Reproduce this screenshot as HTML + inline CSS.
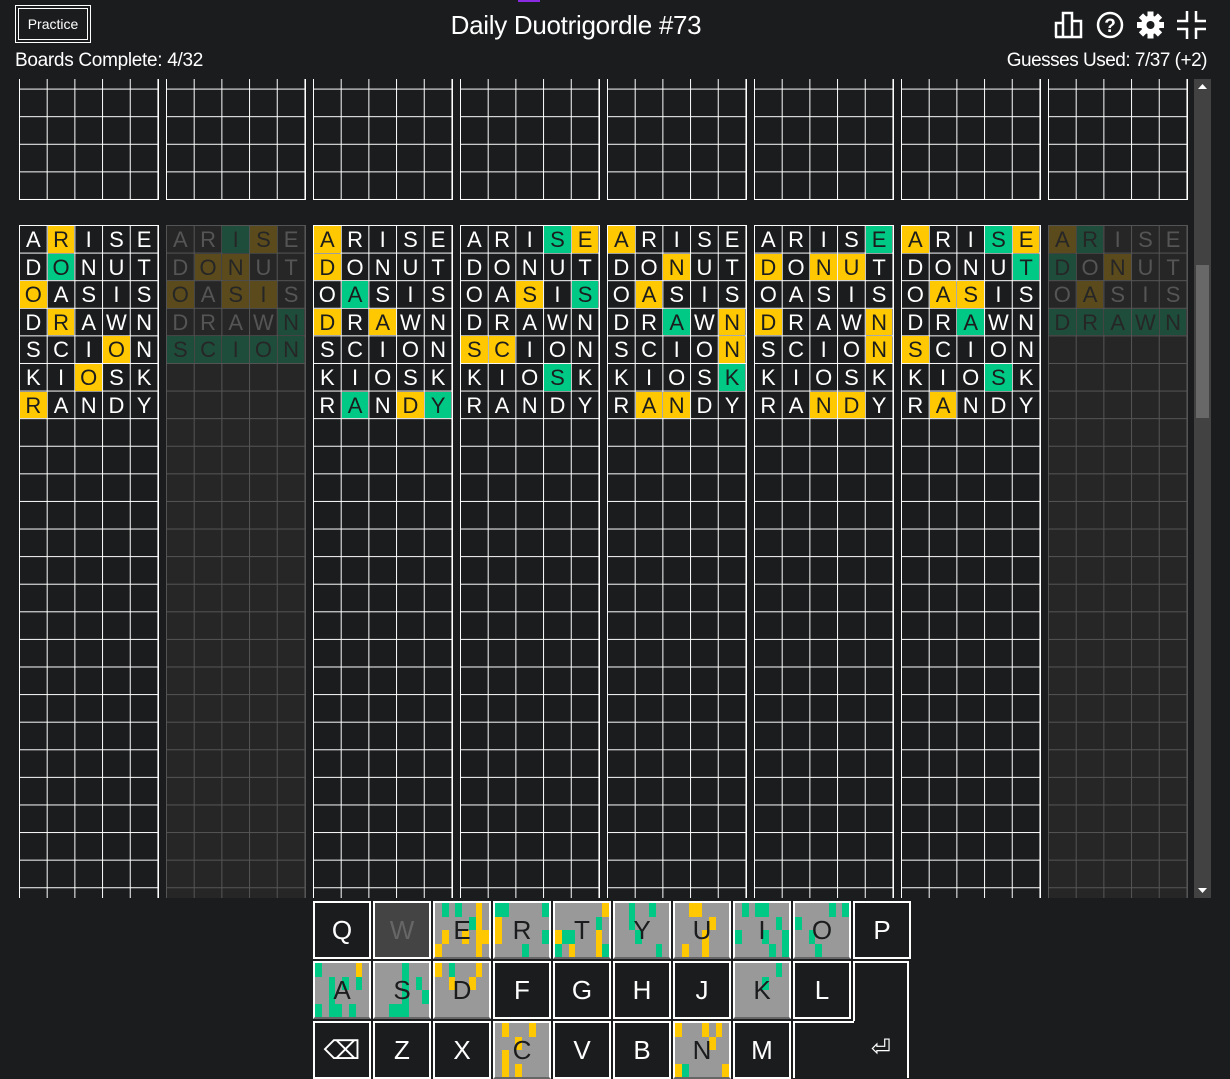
<!DOCTYPE html>
<html><head><meta charset="utf-8"><style>
*{margin:0;padding:0;box-sizing:border-box}
body{width:1230px;height:1078px;background:#1b1c1e;position:relative;overflow:hidden;font-family:"Liberation Sans",sans-serif;color:#fff}
.pr{position:absolute;left:15px;top:5px;width:76px;height:38px;border:4px double #fff;font-size:14px;line-height:30px;text-align:center}
.title{position:absolute;left:376px;width:400px;top:10px;text-align:center;font-size:26px;letter-spacing:-0.3px}
.bc{position:absolute;left:15px;top:50px;font-size:19px;letter-spacing:-0.3px}
.gu{position:absolute;right:23px;top:50px;font-size:19px;letter-spacing:-0.5px}
.sc{position:absolute;left:0;top:79px;width:1192px;height:819px;overflow:hidden}
.b{position:absolute;width:139.5px;border-right:1px solid #fff;border-bottom:1px solid #fff;
background:linear-gradient(to right,#fff 1px,transparent 1px) 0 0/27.7px 27.6px,linear-gradient(to bottom,#fff 1px,transparent 1px) 0 0/27.7px 27.6px}
.b.d{border-color:#555;background:linear-gradient(to right,#555 1px,transparent 1px) 0 0/27.7px 27.6px,linear-gradient(to bottom,#555 1px,transparent 1px) 0 0/27.7px 27.6px,#262626}
.r{display:flex;height:27.6px}
.r span{width:27.7px;height:27.6px;border-left:1px solid transparent;border-top:1px solid transparent;background-clip:padding-box;text-align:center;font-size:22px;line-height:27px}
.d .r span{color:#555}
.r .y{background-color:#ffc800;color:#1b1c1e}
.r .g{background-color:#00c986;color:#1b1c1e}
.d .r .y{background-color:#5a4a1c;color:#262626}
.d .r .g{background-color:#1f4d3c;color:#262626}
.sb{position:absolute;left:1194px;top:79px;width:17px;height:819px;background:#424242}
.th{position:absolute;left:2px;top:186px;width:13px;height:153px;background:#686868}
.k{position:absolute;width:58px;height:58px;border:2px solid #fff;background:#1b1c1e;font-size:26px;text-align:center;line-height:54px}
.k.c{background:#999;color:#1b1c1e;border-bottom-color:#666}
.k.c .m{position:absolute;inset:0;display:grid;grid-template-columns:repeat(8,1fr);grid-template-rows:repeat(4,1fr)}
.m i.g{background:#00c986}.m i.y{background:#ffc800}
.k .t{position:relative}
</style></head><body>
<div style="position:absolute;left:518px;top:0;width:22px;height:2px;background:#8a2be2"></div>
<div class="pr">Practice</div>
<div class="title">Daily Duotrigordle #73</div>
<div class="bc">Boards Complete: 4/32</div>
<div class="gu">Guesses Used: 7/37 (+2)</div>
<svg style="position:absolute;left:1054px;top:11px" width="30" height="28" viewBox="0 0 30 28" fill="none" stroke="#fff" stroke-width="2.5"><path d="M2 26V12H9V26M9 26V2H18V26M18 26V10H27V26H1"/></svg>
<svg style="position:absolute;left:1096px;top:11px" width="28" height="28" viewBox="0 0 28 28"><circle cx="14" cy="14" r="12" fill="none" stroke="#fff" stroke-width="2.5"/><text x="14" y="21" font-size="19" font-weight="bold" text-anchor="middle" fill="#fff" font-family="Liberation Sans">?</text></svg>
<svg style="position:absolute;left:1136px;top:11px" width="29" height="28" viewBox="-14 -14 28 28"><g fill="#fff"><circle r="9.5"/><rect x="-3" y="-13.5" width="6" height="27"/><rect x="-3" y="-13.5" width="6" height="27" transform="rotate(45)"/><rect x="-3" y="-13.5" width="6" height="27" transform="rotate(90)"/><rect x="-3" y="-13.5" width="6" height="27" transform="rotate(135)"/></g><circle r="4" fill="#1b1c1e"/></svg>
<svg style="position:absolute;left:1177px;top:11px" width="29" height="28" viewBox="0 0 29 28" fill="none" stroke="#fff" stroke-width="2.5"><path d="M10 0V10H0M19 0V10H29M0 18H10V28M29 18H19V28"/></svg>

<div class="sc">
<div class="b" style="left:19px;top:-18px;height:139px"></div>
<div class="b" style="left:166px;top:-18px;height:139px"></div>
<div class="b" style="left:313px;top:-18px;height:139px"></div>
<div class="b" style="left:460px;top:-18px;height:139px"></div>
<div class="b" style="left:607px;top:-18px;height:139px"></div>
<div class="b" style="left:754px;top:-18px;height:139px"></div>
<div class="b" style="left:901px;top:-18px;height:139px"></div>
<div class="b" style="left:1048px;top:-18px;height:139px"></div>

<div class="b" style="left:19px;top:146px;height:1026px">
<div class="r"><span>A</span><span class="y">R</span><span>I</span><span>S</span><span>E</span></div>
<div class="r"><span>D</span><span class="g">O</span><span>N</span><span>U</span><span>T</span></div>
<div class="r"><span class="y">O</span><span>A</span><span>S</span><span>I</span><span>S</span></div>
<div class="r"><span>D</span><span class="y">R</span><span>A</span><span>W</span><span>N</span></div>
<div class="r"><span>S</span><span>C</span><span>I</span><span class="y">O</span><span>N</span></div>
<div class="r"><span>K</span><span>I</span><span class="y">O</span><span>S</span><span>K</span></div>
<div class="r"><span class="y">R</span><span>A</span><span>N</span><span>D</span><span>Y</span></div>
</div>
<div class="b d" style="left:166px;top:146px;height:1026px">
<div class="r"><span>A</span><span>R</span><span class="g">I</span><span class="y">S</span><span>E</span></div>
<div class="r"><span>D</span><span class="y">O</span><span class="y">N</span><span>U</span><span>T</span></div>
<div class="r"><span class="y">O</span><span>A</span><span class="y">S</span><span class="y">I</span><span>S</span></div>
<div class="r"><span>D</span><span>R</span><span>A</span><span>W</span><span class="g">N</span></div>
<div class="r"><span class="g">S</span><span class="g">C</span><span class="g">I</span><span class="g">O</span><span class="g">N</span></div>
</div>
<div class="b" style="left:313px;top:146px;height:1026px">
<div class="r"><span class="y">A</span><span>R</span><span>I</span><span>S</span><span>E</span></div>
<div class="r"><span class="y">D</span><span>O</span><span>N</span><span>U</span><span>T</span></div>
<div class="r"><span>O</span><span class="g">A</span><span>S</span><span>I</span><span>S</span></div>
<div class="r"><span class="y">D</span><span>R</span><span class="y">A</span><span>W</span><span>N</span></div>
<div class="r"><span>S</span><span>C</span><span>I</span><span>O</span><span>N</span></div>
<div class="r"><span>K</span><span>I</span><span>O</span><span>S</span><span>K</span></div>
<div class="r"><span>R</span><span class="g">A</span><span>N</span><span class="y">D</span><span class="g">Y</span></div>
</div>
<div class="b" style="left:460px;top:146px;height:1026px">
<div class="r"><span>A</span><span>R</span><span>I</span><span class="g">S</span><span class="y">E</span></div>
<div class="r"><span>D</span><span>O</span><span>N</span><span>U</span><span>T</span></div>
<div class="r"><span>O</span><span>A</span><span class="y">S</span><span>I</span><span class="g">S</span></div>
<div class="r"><span>D</span><span>R</span><span>A</span><span>W</span><span>N</span></div>
<div class="r"><span class="y">S</span><span class="y">C</span><span>I</span><span>O</span><span>N</span></div>
<div class="r"><span>K</span><span>I</span><span>O</span><span class="g">S</span><span>K</span></div>
<div class="r"><span>R</span><span>A</span><span>N</span><span>D</span><span>Y</span></div>
</div>
<div class="b" style="left:607px;top:146px;height:1026px">
<div class="r"><span class="y">A</span><span>R</span><span>I</span><span>S</span><span>E</span></div>
<div class="r"><span>D</span><span>O</span><span class="y">N</span><span>U</span><span>T</span></div>
<div class="r"><span>O</span><span class="y">A</span><span>S</span><span>I</span><span>S</span></div>
<div class="r"><span>D</span><span>R</span><span class="g">A</span><span>W</span><span class="y">N</span></div>
<div class="r"><span>S</span><span>C</span><span>I</span><span>O</span><span class="y">N</span></div>
<div class="r"><span>K</span><span>I</span><span>O</span><span>S</span><span class="g">K</span></div>
<div class="r"><span>R</span><span class="y">A</span><span class="y">N</span><span>D</span><span>Y</span></div>
</div>
<div class="b" style="left:754px;top:146px;height:1026px">
<div class="r"><span>A</span><span>R</span><span>I</span><span>S</span><span class="g">E</span></div>
<div class="r"><span class="y">D</span><span>O</span><span class="y">N</span><span class="y">U</span><span>T</span></div>
<div class="r"><span>O</span><span>A</span><span>S</span><span>I</span><span>S</span></div>
<div class="r"><span class="y">D</span><span>R</span><span>A</span><span>W</span><span class="y">N</span></div>
<div class="r"><span>S</span><span>C</span><span>I</span><span>O</span><span class="y">N</span></div>
<div class="r"><span>K</span><span>I</span><span>O</span><span>S</span><span>K</span></div>
<div class="r"><span>R</span><span>A</span><span class="y">N</span><span class="y">D</span><span>Y</span></div>
</div>
<div class="b" style="left:901px;top:146px;height:1026px">
<div class="r"><span class="y">A</span><span>R</span><span>I</span><span class="g">S</span><span class="y">E</span></div>
<div class="r"><span>D</span><span>O</span><span>N</span><span>U</span><span class="g">T</span></div>
<div class="r"><span>O</span><span class="y">A</span><span class="y">S</span><span>I</span><span>S</span></div>
<div class="r"><span>D</span><span>R</span><span class="g">A</span><span>W</span><span>N</span></div>
<div class="r"><span class="y">S</span><span>C</span><span>I</span><span>O</span><span>N</span></div>
<div class="r"><span>K</span><span>I</span><span>O</span><span class="g">S</span><span>K</span></div>
<div class="r"><span>R</span><span class="y">A</span><span>N</span><span>D</span><span>Y</span></div>
</div>
<div class="b d" style="left:1048px;top:146px;height:1026px">
<div class="r"><span class="y">A</span><span class="g">R</span><span>I</span><span>S</span><span>E</span></div>
<div class="r"><span class="g">D</span><span>O</span><span class="y">N</span><span>U</span><span>T</span></div>
<div class="r"><span>O</span><span class="y">A</span><span>S</span><span>I</span><span>S</span></div>
<div class="r"><span class="g">D</span><span class="g">R</span><span class="g">A</span><span class="g">W</span><span class="g">N</span></div>
</div>
</div>

<div class="sb"><div class="th"></div>
<svg style="position:absolute;left:4px;top:5px" width="9" height="5"><path d="M0 5L4.5 0L9 5Z" fill="#fff"/></svg>
<svg style="position:absolute;left:4px;top:809px" width="9" height="5"><path d="M0 0L4.5 5L9 0Z" fill="#fff"/></svg>
</div>

<div class="k" style="left:313px;top:901px">Q</div>
<div class="k" style="left:373px;top:901px;background:#444;color:#666">W</div>
<div class="k c" style="left:433px;top:901px"><div class="m"><i></i><i class=g></i><i></i><i class=g></i><i></i><i></i><i class=y></i><i></i><i></i><i></i><i></i><i></i><i></i><i class=g></i><i class=y></i><i></i><i></i><i class=y></i><i></i><i></i><i class=y></i><i></i><i class=y></i><i class=y></i><i class=y></i><i></i><i></i><i></i><i></i><i></i><i class=y></i><i></i></div><span class="t">E</span></div>
<div class="k c" style="left:493px;top:901px"><div class="m"><i class=g></i><i class=g></i><i></i><i></i><i></i><i></i><i></i><i class=g></i><i class=y></i><i></i><i></i><i></i><i></i><i></i><i></i><i></i><i class=y></i><i></i><i></i><i></i><i></i><i></i><i></i><i class=g></i><i></i><i></i><i></i><i></i><i class=g></i><i></i><i></i><i></i></div><span class="t">R</span></div>
<div class="k c" style="left:553px;top:901px"><div class="m"><i></i><i></i><i></i><i></i><i></i><i></i><i></i><i class=y></i><i></i><i></i><i></i><i></i><i></i><i></i><i class=g></i><i></i><i class=y></i><i class=g></i><i class=g></i><i></i><i></i><i></i><i class=y></i><i></i><i class=g></i><i></i><i class=y></i><i></i><i></i><i></i><i class=y></i><i class=g></i></div><span class="t">T</span></div>
<div class="k c" style="left:613px;top:901px"><div class="m"><i></i><i></i><i class=g></i><i></i><i></i><i class=g></i><i></i><i></i><i></i><i></i><i class=g></i><i></i><i></i><i></i><i></i><i></i><i></i><i></i><i></i><i class=g></i><i></i><i></i><i></i><i></i><i></i><i></i><i></i><i></i><i></i><i></i><i class=g></i><i></i></div><span class="t">Y</span></div>
<div class="k c" style="left:673px;top:901px"><div class="m"><i></i><i></i><i class=y></i><i class=y></i><i></i><i></i><i></i><i></i><i></i><i></i><i></i><i></i><i></i><i class=y></i><i></i><i></i><i></i><i></i><i></i><i></i><i class=y></i><i></i><i></i><i></i><i></i><i class=y></i><i></i><i></i><i class=y></i><i></i><i></i><i></i></div><span class="t">U</span></div>
<div class="k c" style="left:733px;top:901px"><div class="m"><i></i><i class=g></i><i></i><i class=g></i><i class=g></i><i></i><i></i><i></i><i></i><i></i><i></i><i></i><i></i><i></i><i class=g></i><i></i><i class=g></i><i></i><i></i><i></i><i class=g></i><i></i><i></i><i class=g></i><i></i><i></i><i></i><i></i><i></i><i class=g></i><i></i><i class=g></i></div><span class="t">I</span></div>
<div class="k c" style="left:793px;top:901px"><div class="m"><i></i><i></i><i></i><i></i><i></i><i class=g></i><i></i><i class=g></i><i class=g></i><i></i><i></i><i></i><i></i><i></i><i></i><i></i><i></i><i></i><i class=g></i><i></i><i></i><i></i><i></i><i></i><i></i><i></i><i></i><i class=g></i><i></i><i></i><i></i><i></i></div><span class="t">O</span></div>
<div class="k" style="left:853px;top:901px">P</div>
<div class="k c" style="left:313px;top:961px"><div class="m"><i class=g></i><i></i><i></i><i></i><i></i><i></i><i class=y></i><i></i><i></i><i></i><i class=g></i><i></i><i class=g></i><i></i><i class=g></i><i></i><i></i><i></i><i class=g></i><i></i><i></i><i></i><i></i><i></i><i class=g></i><i></i><i class=g></i><i class=g></i><i></i><i class=g></i><i></i><i></i></div><span class="t">A</span></div>
<div class="k c" style="left:373px;top:961px"><div class="m"><i></i><i></i><i></i><i></i><i class=g></i><i></i><i></i><i></i><i></i><i></i><i></i><i></i><i class=g></i><i></i><i class=g></i><i></i><i></i><i></i><i></i><i></i><i class=g></i><i></i><i></i><i class=g></i><i></i><i></i><i class=g></i><i class=g></i><i class=g></i><i></i><i></i><i></i></div><span class="t">S</span></div>
<div class="k c" style="left:433px;top:961px"><div class="m"><i class=y></i><i></i><i class=g></i><i></i><i></i><i></i><i class=y></i><i></i><i></i><i></i><i class=y></i><i></i><i></i><i class=y></i><i></i><i></i><i></i><i></i><i></i><i></i><i></i><i></i><i></i><i></i><i></i><i></i><i></i><i></i><i></i><i></i><i></i><i></i></div><span class="t">D</span></div>
<div class="k" style="left:493px;top:961px">F</div>
<div class="k" style="left:553px;top:961px">G</div>
<div class="k" style="left:613px;top:961px">H</div>
<div class="k" style="left:673px;top:961px">J</div>
<div class="k c" style="left:733px;top:961px"><div class="m"><i></i><i></i><i></i><i></i><i></i><i></i><i class=g></i><i></i><i></i><i></i><i></i><i></i><i class=g></i><i></i><i></i><i></i><i></i><i></i><i></i><i></i><i></i><i></i><i></i><i></i><i></i><i></i><i></i><i></i><i></i><i></i><i></i><i></i></div><span class="t">K</span></div>
<div class="k" style="left:793px;top:961px">L</div>
<div style="position:absolute;left:853px;top:961px;width:56px;height:62px;border:2px solid #fff;border-bottom:none;background:#1b1c1e"></div>
<div class="k" style="left:313px;top:1021px">⌫</div>
<div class="k" style="left:373px;top:1021px">Z</div>
<div class="k" style="left:433px;top:1021px">X</div>
<div class="k c" style="left:493px;top:1021px"><div class="m"><i></i><i class=y></i><i></i><i></i><i></i><i class=y></i><i></i><i></i><i></i><i></i><i></i><i class=y></i><i></i><i></i><i></i><i></i><i></i><i class=y></i><i></i><i></i><i></i><i></i><i></i><i></i><i></i><i class=y></i><i></i><i class=y></i><i></i><i></i><i></i><i></i></div><span class="t">C</span></div>
<div class="k" style="left:553px;top:1021px">V</div>
<div class="k" style="left:613px;top:1021px">B</div>
<div class="k c" style="left:673px;top:1021px"><div class="m"><i class=y></i><i></i><i></i><i></i><i class=y></i><i></i><i class=y></i><i></i><i></i><i></i><i></i><i></i><i></i><i class=y></i><i></i><i></i><i></i><i></i><i></i><i></i><i></i><i></i><i></i><i></i><i class=y></i><i class=g></i><i></i><i></i><i></i><i></i><i></i><i class=y></i></div><span class="t">N</span></div>
<div class="k" style="left:733px;top:1021px">M</div>
<div style="position:absolute;left:793px;top:1021px;width:116px;height:57px;border:2px solid #fff;border-top:none;border-bottom:none;background:#1b1c1e;font-size:24px;text-align:right;padding-right:16px;line-height:56px">⏎</div>
<div style="position:absolute;left:793px;top:1021px;width:61px;height:2px;background:#fff"></div>
</body></html>
